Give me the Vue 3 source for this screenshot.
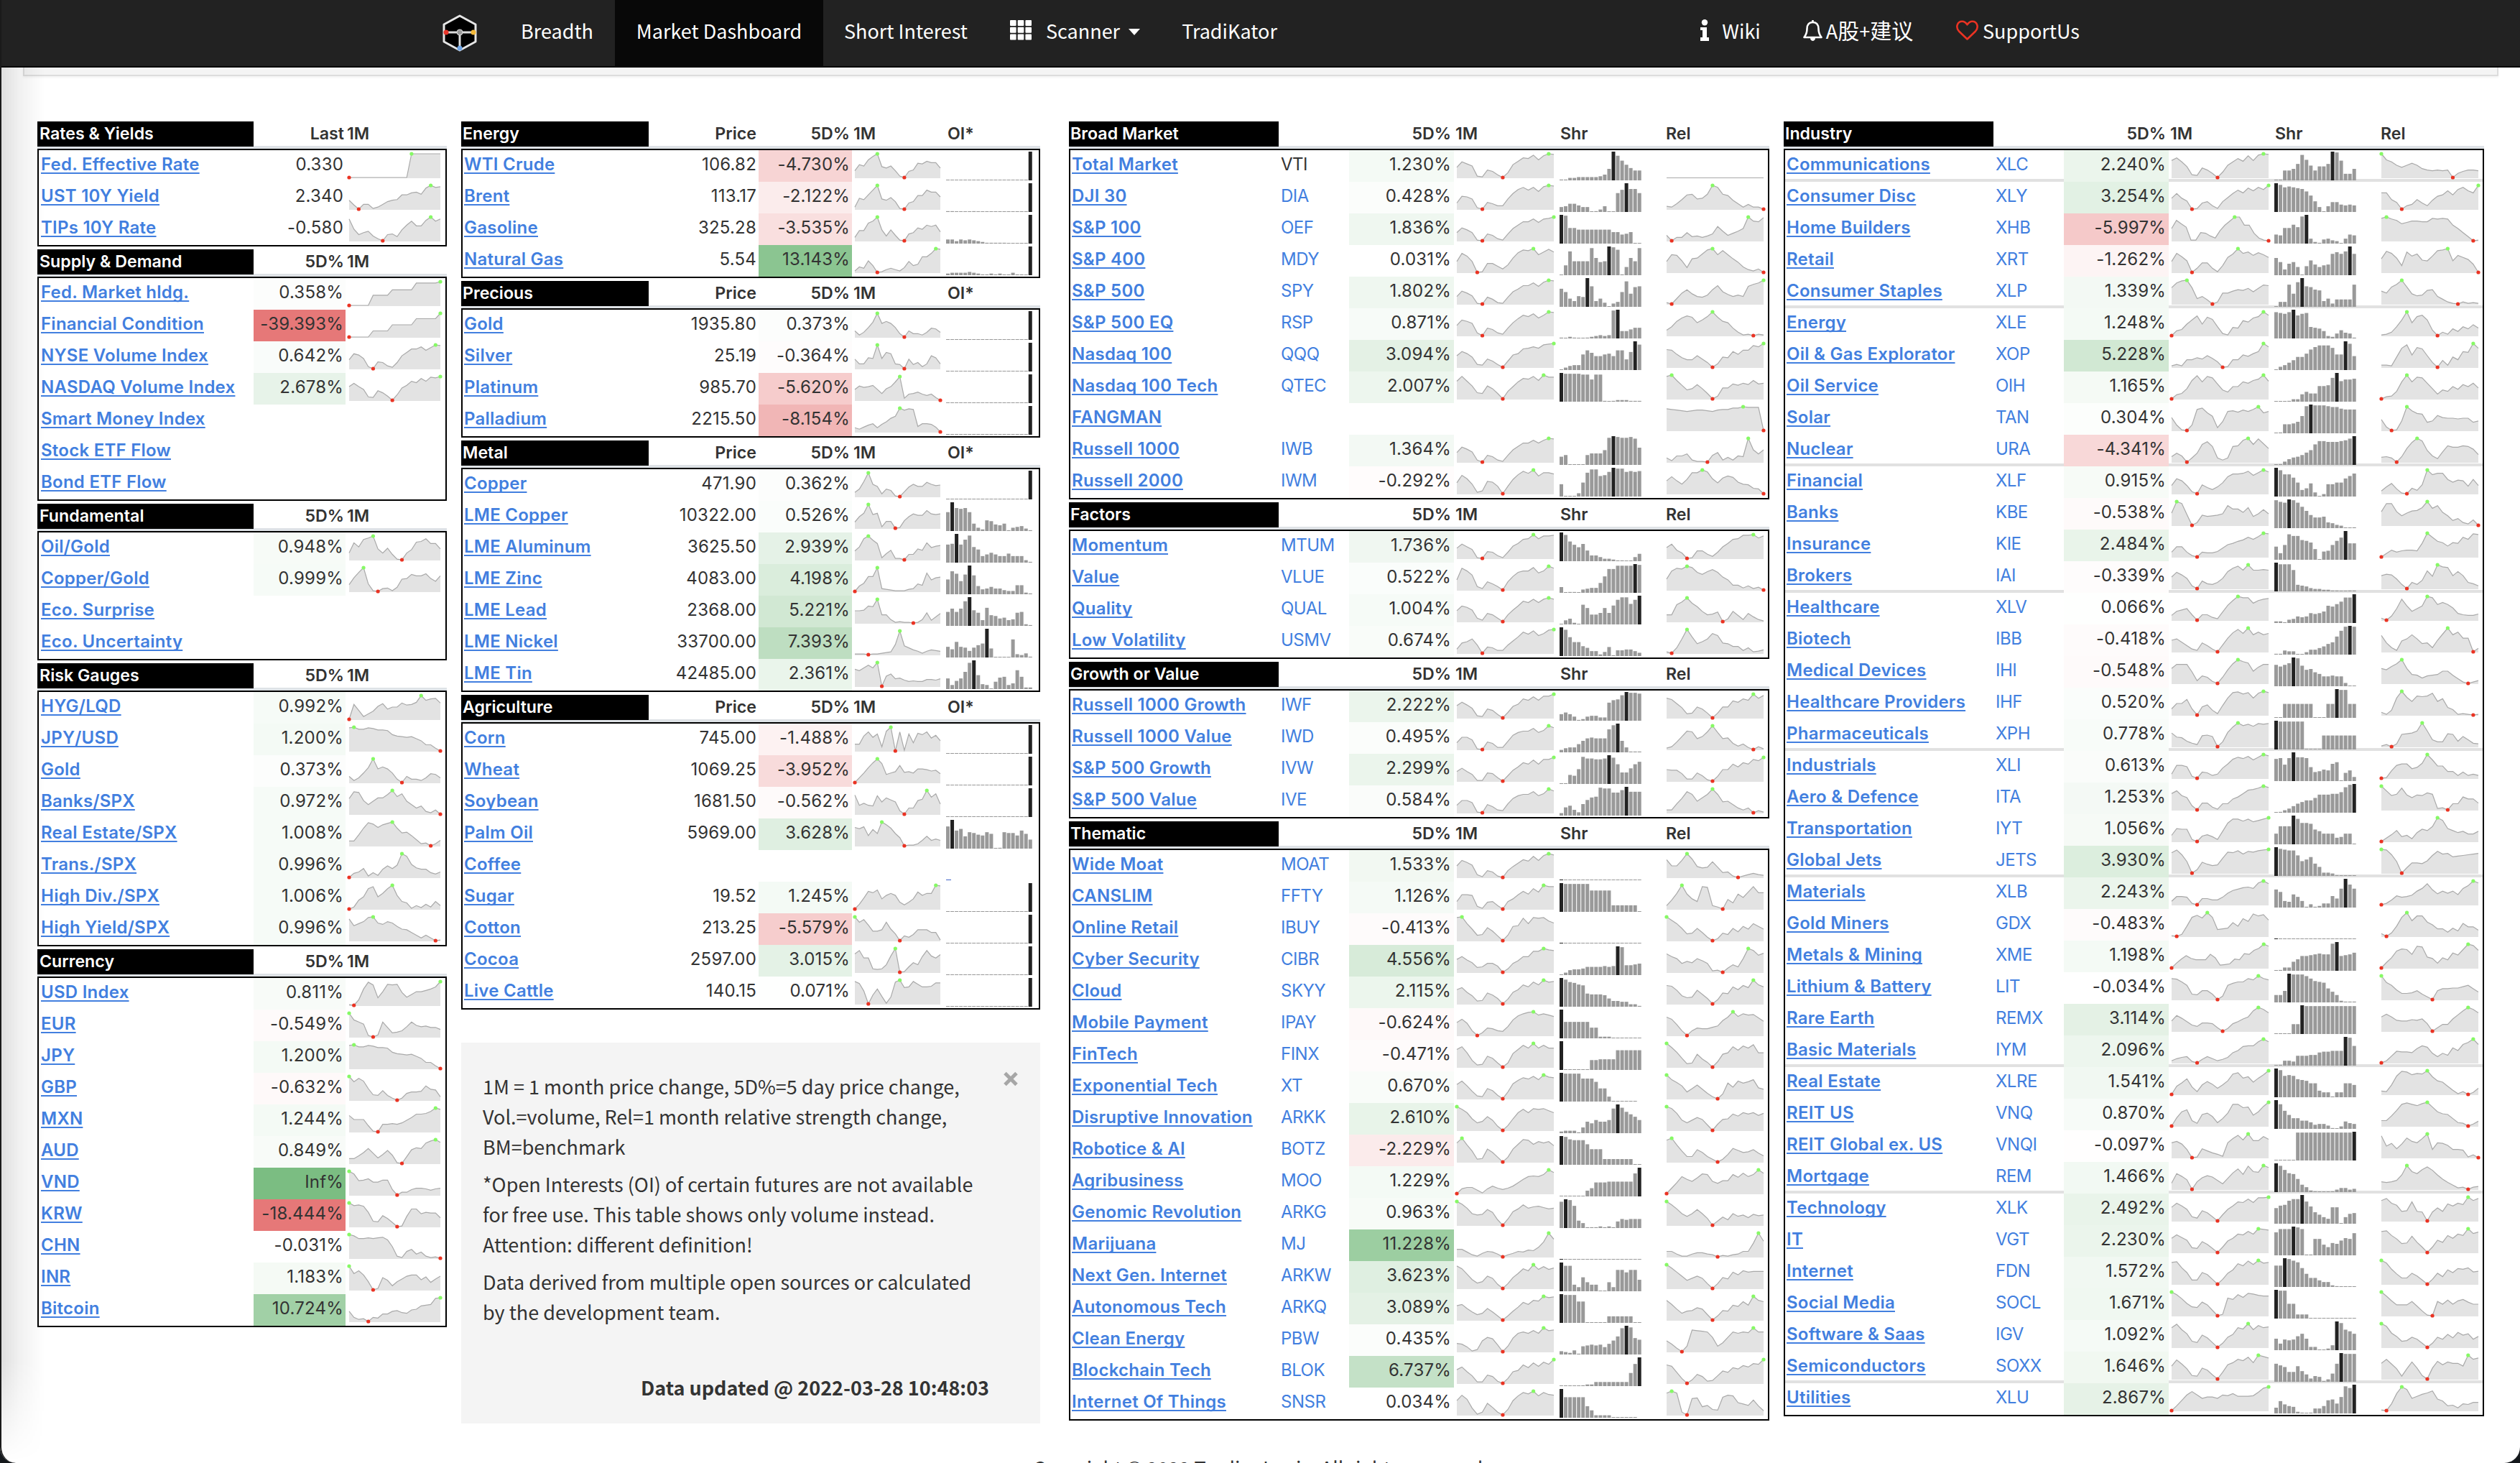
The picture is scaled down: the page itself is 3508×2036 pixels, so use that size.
<script setup>
// Series are packed one character per sample, base 36 (0 = low, z = high).
// "-" draws a flat line, "#" a highlighted bar with no height, "" leaves the cell empty.
const EMPTY_BARS = '#000000000000000000'
const LAST_ONLY = '0000000000000000000z'

const parse = (kind, text) =>
  text.trim().split('\n').map((line) => {
    const f = line.split('|').map((s) => s.trim())
    if (kind === 'macro') return { name: f[0], value: f[1], line: f[2] }
    if (kind === 'futures') return { name: f[0], price: f[1], value: f[2], line: f[3], bars: f[4] === 'L' ? LAST_ONLY : f[4] }
    return { name: f[0], ticker: f[1], value: f[2], line: f[3], bars: f[4] === 'E' ? EMPTY_BARS : f[4], rel: f[5], rule: f[6] === '_' }
  })

const section = (kind, title, text, first = '5D%') => ({ title, first, rows: parse(kind, text) })

const macro = [
  section('macro', 'Rates & Yields', `
Fed. Effective Rate|0.330|0000000000000zzzzzzz
UST 10Y Yield|2.340|d6077137bdellopmvzwx
TIPs 10Y Rate|-0.580|wh9ce7309a6gntmmuztw`, 'Last'),
  section('macro', 'Supply & Demand', `
Fed. Market hldg.|0.358%|00000ffffnnnnnxxxxxz
Financial Condition|-39.393%|000009999iiiiirrrrrz
NYSE Volume Index|0.642%|dmkf30a9429jottwrvzy
NASDAQ Volume Index|2.678%|kpkg54eb608imsqwsyxz
Smart Money Index||
Stock ETF Flow||
Bond ETF Flow||`),
  section('macro', 'Fundamental', `
Oil/Gold|0.948%|apjuwzgah810afqrvoog
Copper/Gold|0.999%|akszb104516ijpnnqjfn
Eco. Surprise||
Eco. Uncertainty||`),
  section('macro', 'Risk Gauges', `
HYG/LQD|0.992%|0md48cjnfiiolmpzsuvo
JPY/USD|1.200%|yzwwyxvvuomlklif9940
Gold|0.373%|937emzknke5095537dc7
Banks/SPX|0.972%|nxwkejootzquje9c4260
Real Estate/SPX|1.008%|77gqywrvxzqjkf934038
Trans./SPX|0.996%|068d273chdizvjecc758
High Div./SPX|1.006%|03diuxinuzkb915273b5
High Yield/SPX|0.996%|wmpsyzqosqlhgc848401`),
  section('macro', 'Currency', `
USD Index|0.811%|108oyubkvuvjcgkkmorz
EUR|-0.549%|zpmj203me679fmhfgeeb
JPY|1.200%|yzwwyxvvuomlklif9940
GBP|-0.632%|zrwsh87e7303accdlgf5
MXN|1.244%|oiii910bbcbdhlqqruzx
AUD|0.849%|77bgmf8djc10aknmuxzv
VND|Inf%|zvlmojjmm80448aa979a
KRW|-18.444%|zvwul87gc601fqqjlkkd
CHN|-0.031%|zxttutuvrh31ad693120
INR|1.183%|zosmc02ie6cgkmmfjbgk
Bitcoin|10.724%|f634065bbfgdchinopyz`),
]

const futures = [
  section('futures', 'Energy', `
WTI Crude|106.82|-4.730%|ajhqvzgeha209blkomme|L
Brent|113.17|-2.122%|3gelszfdhb109bkksppi|1100001000000000000z
Gasoline|325.28|-3.535%|5ffqtzg7g810acjhnlnd|5535454321111100000z
Natural Gas|5.54|13.143%|286ha0146427gacnnszy|2333343211212113110z`),
  section('futures', 'Precious', `
Gold|1935.80|0.373%|937emzknke5095537dc7|L
Silver|25.19|-0.364%|e77gfzfom760e6937jg7|L
Platinum|985.70|-5.620%|gljkmgahkrz39ac97940|L
Palladium|2215.50|-8.154%|647ac6bfknzwyx8ccb70|L`),
  section('futures', 'Metal', `
Copper|471.90|0.362%|6bmzif4b9107eiffligh|L
LME Copper|10322.00|0.526%|9hmzkm2aa01bhljjqlkl|nzsrsn942dc879145631
LME Aluminum|3625.50|2.939%|djvzto39e22088gepikl|mnzmsxjg8aca88b88831
LME Zinc|4083.00|4.198%|08cmmz43211134b9rhkl|ispgozna67977544bb21
LME Lead|2368.00|5.221%|iijpozcc51211015f49e|hlhluzjg7mdc9a78gh21
LME Nickel|33700.00|7.393%|111011234fzda7525765|dajdc8cfhzb0000m4351
LME Tin|42485.00|2.361%|pnrvrz0fibc97877aa9b|d5adlwzh6509ef57nf22`),
  section('futures', 'Agriculture', `
Corn|745.00|-1.488%|aamskp6tz0s1pcqosjnf|L
Wheat|1069.25|-3.952%|07emtzscegpfgekkjhid|L
Soybean|1681.50|-0.562%|sdgdcriolI5099kmzpuf|L
Palm Oil|5969.00|3.628%|rpsfoizvqic01138e8a8|rzmofkjhgki01kjjgmib
Coffee||||.
Sugar|19.52|1.245%|07gqosfknka6afpknnzy|L
Cotton|213.25|-5.579%|zrvneegrha0759gggcc1|L
Cocoa|2597.00|3.015%|rwll545boz018ebnwolq|L
Live Cattle|140.15|0.071%|xuj0dmb1awzopxtppqvv|L`),
]

const equity = [
  section('etf', 'Broad Market', `
Total Market|VTI|1.230%|fnkh21b9407jotsxqwzy|11334444457ezuojfcc|-
DJI 30|DIA|0.428%|9jif20a855fntwswqxzy|67aa866013700nrzssn|438elmfgmzwmkd837330
S&P 100|OEF|1.836%|cjgc10a831ainsswrwxz|zyjjhhhhhhhheebce00|8055c6757ale8beiztsy
S&P 400|MDY|0.031%|gsog01dd95bltxwzquyu|0cthhhhxlghzyv1alhx|gqph7klrxzqwqkf84250
S&P 500|SPY|1.802%|bjgc10a721aimrrvqwzy|mia7dczp7a5046ivgop|208glfbadlriebdbqtvz
S&P 500 EQ|RSP|0.871%|fnli40b942bjpuswquzy|102100123434yz99bdd|8dlqtrjnszrljb512021
Nasdaq 100|QQQ|3.094%|hnkf43c9409ikrsusxyz|03566jolhhjkhoodmzv|qpjebbhc705fenjppwuz
Nasdaq 100 Tech|QTEC|2.007%|qxqj98jf80biputxrzww|zyyyyxxrxx101222111|xzrkdflf804ggmknlrmn
FANGMAN|||||wvutstuutsuvvxxzyyy0
Russell 1000|IWB|1.364%|emjf30a831ainsswswzy|ac0000ceeeixzyxxywl|6299c3110ae37398zici
Russell 2000|IWM|-0.292%|grme24ihb0blsxuzqvvt|f0004htxxpquzyyuvuv|jpjelvvzwmgnqohed870`),
  section('etf', 'Factors', `
Momentum|MTUM|1.736%|flhd10a9419imstztxxy|zwokhld775332110059|glc801bb639hmstyyzux
Value|VLUE|0.522%|fwsm52c950ckqssxpszw|701104566ckttxxxxzy|gswvzxqnruqjf7736240
Quality|QUAL|1.004%|gnlh52ca50ahnusxsxzx|05720okccekenuxxpuz|aaptzrmfabe04f93c731
Low Volatility|USMV|0.674%|6fhlc09844ciovsxqtyz|zwnhhca6625b1778864|208lzoehltqfeaa48235`),
  section('etf', 'Growth or Value', `
Russell 1000 Growth|IWF|2.222%|inje32db508hksqvqwwz|8a851256644mpqvzyyx|trlf67gd707ggpnsqztx
Russell 1000 Value|IWD|0.495%|aiie10b933clprrvpszw|3566aehihhhsxze6111|24bjrqgjqzpgh9583041
S&P 500 Growth|IVW|2.299%|ejea11cb508glrpvpwwz|00baixvvuuvzwoeejor|hggb33c8207hhplrpwuz
S&P 500 Value|IVE|0.584%|biif10c943dlprrvpszw|3ac74ejmnyxxssvzttt|44dlvrhmrzrghc747031`),
  section('etf', 'Thematic', `
Wide Moat|MOAT|1.533%|hpmi41a820aglqovpwzx|E|qhhpzrgefnf782024643
CANSLIM|FFTY|1.126%|bllk41ab50bflqmupzxx|zyyyyyyqqqqq8888880|5dnzmfbxw530e9mhpxoo
Online Retail|IBUY|-0.413%|yzph89je708lmxpyxytq|E|zupiabic503b9idlhplh
Cyber Security|CIBR|4.556%|jnie78dd905dhnnvvzxw|036778aaaababzyccde|rnkdgekhd2306b8kzwps
Cloud|SKYY|2.115%|lohc45gd807hlspwszwx|zxutrqgfffea7766331|rqkc9ake806gfplrozsp
Mobile Payment|IPAY|-0.624%|joi704ba76dntwyzuwus|zkkkkkkdd2220000000|rog707baacemrzswuvql
FinTech|FINX|-0.471%|qula34gd606kqwszswss|z000000ccddddoooooo|ztmd56jc708jlupvsxll
Exponential Tech|XT|0.670%|lqjb43fc50amrvtxszwv|zyyyyssso​gg6000000|zsojafke8307nhqnpsge
Disruptive Innovation|ARKK|2.610%|zvqhbdkf607hqvqwvwtq|233317ecgeeguzvqnkg|zwpfbfjg809gholqoqmp
Robotice & AI|BOTZ|-2.229%|szpg45je707jqxwqusuo|zyvuuupjjj777777700|wzpg88ie8404bkhefid9
Agribusiness|MOO|1.229%|0799517b868bglpqpszv|0000007ahhhiiiiiisz|08gplintsifjjsoupszu
Genomic Revolution|ARKG|0.963%|zvphfgnj809kouprsqop|wzyr9611121218babbb|zuohdhnha06c8hdfbgef
Marijuana|MJ|11.228%|bb731587403587a9emzq|E|88411466430213488kzn
Next Gen. Internet|ARKW|3.623%|xtld8aif607gmtqzswsu|zvv85hb8800b5qqnqqe|zuoicfif707geokqoppp
Autonomous Tech|ARKQ|3.089%|lnhc8ahc606djqntszxy|zyyyqq0000088888800|tngadeig806edmkrmztr
Clean Energy|PBW|0.435%|cb713glja08krtrvrzvw|43251abcbc9dhmwzxki|gb508wvutl8dltrtsztt
Blockchain Tech|BLOK|6.737%|kohb22ca307hjrnupvsz|0000012255555555grz|rpg705da34bignlqotsz
Internet Of Things|SNSR|0.034%|ltna14hb408lsxvzsxut|zppppp​e93333000000|wzw40opce87qtsigemd6`),
]

const industry = [
  section('etf', 'Industry', `
Communications|XLC|2.240%|ptng43eb608insowpxzy|00ccekvpichhkzyo88e|zqnifilidbabab069bba|_
Consumer Disc|XLY|3.254%|gngc019b51bhnsovrwtz|zxuvutspkd607cc9898|ooea057e95djlrltwroz
Home Builders|XHB|-5.997%|iupk11cb74fntzznnb410|bajjnkxz621564306ba|xzwuprttssxwxwnic601
Retail|XRT|-1.262%|gsnh06ee61amrzsuptqm|lg7ega0bidacdqsqtzq|kvslauorihowxzhpmjc0
Consumer Staples|XLP|1.339%|ovyzo8b603ggjlkninsr|066rguzpolk7a49999r|jgptzpfcdklb73103121|_
Energy|XLE|1.248%|079hnthrod31cbmkqszu|wvuwzsuvedc9326a761|125dnzjsun8052a6dagb
Oil & Gas Explorator|XOP|5.228%|242bbechd801bbigknzu|0469cggkpsuuurjjzwh|332fsxitrh70a3fbnmzs
Oil Service|OIH|1.165%|068frypxvmdaiipnrtzq|0001339caajjktzprrs|034bpzpwvnf7dbieling
Solar|TAN|0.304%|j8108vxql4dstrusvzqs|01bbcelxzyyyxwwuttt|g501eztpocemjiihiice
Nuclear|URA|-4.341%|8d906dqun636nowzqyrk|01479acfipttssstuwz|78608ktzvh95fommonjb|_
Financial|XLF|0.915%|cmjc30d96agpttuxrvzw|zwrrnh8ag503ffhhmps|4af71085dzsuulhkjblc
Banks|KBE|-0.538%|izwg04fdefhtoojqdhnh|ywvzyvqlgdde7643001|kwwkeilmqzptje7a4280
Insurance|KIE|2.484%|7ff7207668diknptquzy|g8ivttonld0abinrzkk|05a79aa9kztnlglktqyx
Brokers|IAI|-0.339%|hokf40b769fpuxrzrrsr|zxxxq87643322110011|jlke6096cqizwvjpj974|_
Healthcare|XLV|0.066%|7dfh808842cmtzxxptvw|22045878cbcelknqvvz|306hvldhlzxnqnia8779
Biotech|IBB|-0.418%|hje942d940aksxrzptpr|11544003668adfmtyzy|od62gjpjcd6hqzptkk05
Medical Devices|IHI|-0.548%|msssh4b9309ktzwuioss|qoqszypklhfccdcc400|mkptzmdc8bcdiic72024
Healthcare Providers|IHF|0.520%|9hhn90cf72epxyvxpwzx|00hhhhhhh000hhzyyhh|417pzqksrswkob812101
Pharmaceuticals|XPH|0.778%|ked853ghf07ltzvxuyxy|zyyyyyy0000hhhhhhhh|1304ijknzna77ji8fa54|_
Industrials|XLI|0.613%|6jjh309846flsvtwrvzx|rskszttshbcedln1ad5|01bjllegmzriiaa49464
Aero & Defence|ITA|1.253%|osli60aa4199gjotuwzx|01358bdffimmmnnpvyz|zslnwmimlpn23099jgga
Transportation|IYT|1.056%|9jii308a73frxxuxtvxz|dmmmzvqqpigddd89dd0|05ag794digmzvjgdfbbf
Global Jets|JETS|3.930%|uyrh05gdbcmvuxswvxyz|zxwvvpiknfb44310000|zyrh08ffeiqwstopqrst|_
Materials|XLB|2.243%|5ccb209977bhlnpqowzv|mj87gd8141255ebnzsn|027dbcekovmgkhkfoszw
Gold Miners|GDX|-0.483%|103fsvrzsabckfqmxuwo|E|405fsznuulhbb6c8jee9
Metals & Mining|XME|1.198%|07dieccckf456dclkqtzw|0144beiijklkkxzijkm|08fpsrkwvge7fcmjrzxq
Lithium & Battery|LIT|-0.034%|vuql87dd805loqqvtzvt|99ezyyywtqpohd92111|zple99ad840dgghhjlgb
Rare Earth|REMX|3.114%|fnje97ccb504beiluzwr|0000cczyyyyyyyyyyyy|lplgffhgib05aaiouzwr
Basic Materials|IYM|2.096%|368920596358fioppvzv|01665cccddghhiiizyo|03ahggflpne9ebmiruzr|_
Real Estate|XLRE|1.541%|0chnb4ejf9ekuwoqiotz|zxqrqmlkhh866166hhf|54eryxtvuzqkic614039
REIT US|VNQ|0.870%|0clo84hje5bjwwrsgltz|zumhddaa85664103976|88fnwywuxzslihb54037
REIT Global ex. US|VNQI|-0.097%|mokc01da752msxqzppvr|00000yyyyyyyyyyyyyz|whldktomszcmliccb140
Mortgage|REM|1.466%|9nje0bhkid8goumyqpzw|zwrnmg9621000135534|babdlzqntxslfa623034|_
Technology|XLK|2.492%|kqmh64fc609hmsrwryyz|jmnsuuzrleb86kk08cd|uxqnefsed0djepmqozux
IT|VGT|2.230%|lqmi76gc608hlrqvrzyx|swwwzyw11kkdafeilkr|vwpkdeof808ifplrpzsu
Internet|FDN|1.572%|wxoh66he707glurytzvw|qqzywungbb866210000|zvmf99gc607gblhnmoij
Social Media|SOCL|1.671%|zvpidckg802qovrxwutt|zyyii55500000000000|ztmgggle710lhnhmokhh
Software & Saas|IGV|1.092%|tyqk97ie706fjtrzqwtu|e8dcdhke440026zxpnk|zvlg9afc606fcjemikcg
Semiconductors|SOXX|1.646%|jsmf54gd60alotrwozxv|mkiccjd947603amzyyy|ntmf4fpg50gqlpnnjztv|_
Utilities|XLU|2.867%|07fnsnikkinmplllmrxz|7fb982101669ghckxvz|10apzviloqthe784a9cc`),
]

const clean = (s) => (s || '').replace(/[^0-9a-z#.-]/gi, '').toLowerCase()

// Price line: samples spread over the width, 33px tall, floor at y=38.
const spark = (raw, w) => {
  const s = clean(raw)
  if (!s) return null
  if (s === '-') return { flat: true, w }
  const step = w / (s.length - 1)
  const pts = [...s].map((c, i) => [i * step, 38 - (parseInt(c, 36) / 35) * 33])
  const line = pts.map((p) => p.map((n) => n.toFixed(1)).join(',')).join(' ')
  return { w, line, area: `0,39 ${line} ${w},39`, low: pts[s.indexOf('0')], high: pts[s.indexOf('z')] }
}

const bars = (raw) => {
  const s = clean(raw)
  if (!s) return []
  if (s === '.') return [{ x: 0, h: 1, w: 7, tone: '#3f63c8' }]
  return [...s].map((c, i) => {
    const v = c === '#' ? 0 : parseInt(c, 36)
    return { x: i * 6.04, w: 5, h: Math.max(1, (v / 35) * 40), tone: c === 'z' || c === '#' ? '#222' : '#999' }
  })
}

const tint = (value) => {
  if (!value || !value.endsWith('%')) return {}
  const v = value === 'Inf%' ? 15 : parseFloat(value)
  const k = Math.min(1, Math.abs(v) / 15)
  const end = v >= 0 ? [123, 189, 130] : [230, 120, 120]
  return { background: `rgb(${end.map((c) => Math.round(255 - (255 - c) * k)).join(',')})` }
}

const columns = [
  { kind: 'macro', w: 127, sections: macro },
  { kind: 'futures', w: 119, sections: futures },
  { kind: 'etf', w: 135, sections: equity },
  { kind: 'etf industry', w: 135, sections: industry },
].map((col) => ({
  ...col,
  sections: col.sections.map((sec) => ({
    ...sec,
    rows: sec.rows.map((r) => ({ ...r, line: spark(r.line, col.w), bars: bars(r.bars), rel: spark(r.rel, 135) })),
  })),
}))
</script>

<template>
  <div class="page">
    <nav class="nav">
      <svg class="logo" viewBox="0 0 48 52" width="48" height="52">
        <path d="M24 2 46 14V38L24 50 2 38V14Z" fill="#000" stroke="#e6e6e6" stroke-width="3" stroke-linejoin="round" />
        <path d="M3 25H45M24 25V48" stroke="#ddd" stroke-width="3" />
        <circle cx="24" cy="25" r="4" fill="#999" stroke="#ddd" />
        <circle cx="5" cy="25" r="3.5" fill="#e8362a" />
        <circle cx="43" cy="25" r="3.5" fill="#f4b93a" />
        <circle cx="24" cy="47" r="3.5" fill="#6fa5e6" />
      </svg>
      <a class="item breadth">Breadth</a>
      <a class="item active">Market Dashboard</a>
      <a class="item short">Short Interest</a>
      <a class="item scanner">
        <svg width="30" height="28" viewBox="0 0 30 28" fill="#fff">
          <template v-for="r in 3" :key="r">
            <rect v-for="c in 3" :key="c" :x="(c - 1) * 10.7" :y="(r - 1) * 9.8" width="8.6" height="8" rx="1" />
          </template>
        </svg>
        <span>Scanner</span><i class="caret"></i>
      </a>
      <a class="item trad">TradiKator</a>
      <a class="item wiki">
        <svg width="12" height="30" viewBox="0 0 12 30" fill="#fff"><circle cx="6" cy="4.2" r="4.2" /><path d="M0 11H9V25H12V30H0V25H3V15H0Z" /></svg>
        <span>Wiki</span>
      </a>
      <a class="item advice">
        <svg width="27" height="31" viewBox="0 0 27 31" fill="none" stroke="#fff" stroke-width="2.6" stroke-linejoin="round">
          <path d="M13.5 1V4M13.5 4C8 4 5.5 8 5.5 13C5.5 20 3.5 22 1.5 25H25.5C23.5 22 21.5 20 21.5 13C21.5 8 19 4 13.5 4Z" />
          <path d="M10.5 26.5C10.5 30.5 16.5 30.5 16.5 26.5Z" fill="#fff" stroke-width="1" />
        </svg>
        <span>A<b>股</b>+<b>建议</b></span>
      </a>
      <a class="item support">
        <svg width="31" height="28" viewBox="0 0 31 28" fill="none" stroke="#ea3323" stroke-width="2.6" stroke-linejoin="round">
          <path d="M15.5 26.5 4 15.5C-1 10 1.5 1.8 8.5 1.8 12 1.8 14 4.2 15.5 6.3 17 4.2 19 1.8 22.5 1.8 29.5 1.8 32 10 27 15.5Z" />
        </svg>
        <span>SupportUs</span>
      </a>
    </nav>
    <div class="strip"></div>

    <main class="board">
      <div v-for="(col, ci) in columns" :key="ci" class="col" :class="col.kind">
        <section v-for="sec in col.sections" :key="sec.title" class="sec">
          <header class="head">
            <span class="title">{{ sec.title }}</span>
            <span v-if="col.kind === 'futures'" class="num">Price</span>
            <span v-else-if="col.kind !== 'macro'"></span>
            <span class="num">{{ sec.first }}</span>
            <span class="h1m">1M</span>
            <span v-if="col.kind === 'futures'" class="hbar">OI*</span>
            <template v-else-if="col.kind !== 'macro'">
              <span class="hbar">Shr</span><span class="hrel">Rel</span>
            </template>
          </header>
          <div class="box">
            <div v-for="row in sec.rows" :key="row.name" class="row" :class="{ rule: row.rule }">
              <span class="name"><a>{{ row.name }}</a></span>
              <span v-if="col.kind === 'futures'" class="num">{{ row.price }}</span>
              <span v-else-if="col.kind !== 'macro'" class="ticker" :class="{ plain: row.ticker === 'VTI' }">{{ row.ticker }}</span>
              <span class="num pct" :style="tint(row.value)">{{ row.value }}</span>
              <span class="cell">
                <svg v-if="row.line" class="chart" :width="row.line.w" height="44">
                  <polygon :points="row.line.area" fill="#e3e3e3" />
                  <polyline :points="row.line.line" fill="none" stroke="#a9a9a9" stroke-width="1.2" />
                  <circle v-if="row.line.high" :cx="row.line.high[0]" :cy="row.line.high[1]" r="2.6" fill="#86f965" />
                  <circle v-if="row.line.low" :cx="row.line.low[0]" :cy="row.line.low[1]" r="2.6" fill="#ea3323" />
                </svg>
              </span>
              <span v-if="col.kind !== 'macro'" class="cell">
                <svg class="chart" width="121" height="44">
                  <rect v-for="(b, bi) in row.bars" :key="bi" :x="b.x" :y="42 - b.h" :width="b.w" :height="b.h" :fill="b.tone" />
                </svg>
              </span>
              <span v-if="col.kind.startsWith('etf')" class="cell">
                <svg v-if="row.rel" class="chart" :width="row.rel.w" height="44">
                  <path v-if="row.rel.flat" d="M0 38.5H135" stroke="#a9a9a9" />
                  <template v-else>
                    <polygon :points="row.rel.area" fill="#e3e3e3" />
                    <polyline :points="row.rel.line" fill="none" stroke="#a9a9a9" stroke-width="1.2" />
                    <circle v-if="row.rel.high" :cx="row.rel.high[0]" :cy="row.rel.high[1]" r="2.6" fill="#86f965" />
                    <circle v-if="row.rel.low" :cx="row.rel.low[0]" :cy="row.rel.low[1]" r="2.6" fill="#ea3323" />
                  </template>
                </svg>
              </span>
            </div>
          </div>
        </section>

        <aside v-if="col.kind === 'futures'" class="note">
          <svg class="close" width="20" height="21" viewBox="0 0 20 21"><path d="M2 2.5 18 18.5M18 2.5 2 18.5" stroke="#a6a6a6" stroke-width="5" /></svg>
          <p>1M = 1 month price change, 5D%=5 day price change,<br />Vol.=volume, Rel=1 month relative strength change,<br />BM=benchmark</p>
          <p>*Open Interests (OI) of certain futures are not available<br />for free use. This table shows only volume instead.<br />Attention: different definition!</p>
          <p>Data derived from multiple open sources or calculated<br />by the development team.</p>
          <p class="updated">Data updated @ 2022-03-28 10:48:03</p>
        </aside>
      </div>
    </main>
    <footer class="foot">Copyright © 2022 TradingLogic. All rights reserved</footer>
    <div class="shade"></div>
    <div class="frame"></div>
  </div>
</template>

<style>
body {
  margin: 0;
  background: #fff;
}
</style>

<style scoped>
.page {
  position: relative;
  width: 3508px;
  height: 2036px;
  overflow: hidden;
  background: #fff;
  color: #333;
  font-family: Inter, "Liberation Sans", sans-serif;
  font-size: 24px;
  box-sizing: border-box;
}
.nav {
  display: flex;
  align-items: stretch;
  height: 92px;
  padding-left: 616px;
  background: #222;
  border-bottom: 2px solid #080808;
  color: #fff;
  font: 27px "Noto Sans CJK SC", sans-serif;
}
.logo {
  margin: 20px 31px 0 0;
  flex: none;
}
.item {
  display: flex;
  align-items: center;
  justify-content: center;
  flex: none;
  box-sizing: border-box;
  padding-bottom: 8px;
  white-space: nowrap;
}
.breadth { width: 161px; }
.active { width: 290px; background: #080808; }
.short { width: 230px; }
.scanner { width: 241px; margin-right: -2px; }
.scanner span { margin: 0 12px 0 20px; }
.caret {
  border: 8px solid transparent;
  border-top: 9px solid #fff;
  border-bottom: 0;
  margin-top: 4px;
}
.trad { width: 193px; }
.wiki { width: 142px; margin-left: 530px; }
.wiki span { margin-left: 18px; }
.advice { width: 213px; }
.advice span { margin-left: 5px; }
.advice b { font-weight: 400; font-size: 30px; line-height: 30px; }
.support { width: 232px; }
.support span { margin-left: 6px; }
.strip {
  height: 10px;
  margin: 0 30px 0 32px;
  background: #f4f4f4;
  border: 2px solid #ddd;
  border-top: 0;
  box-shadow: 0 2px 3px rgba(0, 0, 0, 0.05);
}
.board {
  display: flex;
  align-items: flex-start;
  padding: 63px 0 0 52px;
}
.col { flex: none; }
.macro { width: 570px; margin-right: 20px; }
.futures { width: 806px; margin-right: 40px; }
.etf { width: 975px; margin-right: 20px; }
.sec { margin-bottom: 4px; }
.head {
  display: grid;
  height: 34px;
  line-height: 35px;
  border-bottom: 4px solid #dee2e6;
  font-size: 23.2px;
  font-weight: 600;
  white-space: nowrap;
}
.title {
  background: #000;
  color: #fff;
  padding-left: 3px;
}
.futures .title, .etf .title { padding-left: 2px; }
.box { border: 2px solid #000; }
.row {
  display: grid;
  height: 44px;
  line-height: 39px;
  white-space: nowrap;
}
.rule { background: linear-gradient(#e1e1e1, #e1e1e1) 0 100% / 100% 4px no-repeat; }
.macro .head { grid-template-columns: 301px 128px 1fr; }
.macro .row { grid-template-columns: 299px 133px 1fr; }
.futures .head { grid-template-columns: 261px 153px 130px 131px 1fr; }
.futures .row { grid-template-columns: 259px 153px 134px 127px 1fr; }
.etf .head { grid-template-columns: 292px 98px 146px 146px 147px 1fr; }
.etf .row { grid-template-columns: 290px 98px 150px 143px 149px 1fr; }
.name {
  padding-left: 3px;
  font-weight: 600;
  letter-spacing: 0.25px;
  color: #427fdf;
}
.futures .name, .etf .name { padding-left: 2px; }
.name a {
  text-decoration: underline;
  text-decoration-thickness: 2px;
  text-underline-offset: 3px;
  text-decoration-skip-ink: none;
}
.ticker {
  color: #427fdf;
  padding-left: 3px;
  letter-spacing: -0.5px;
}
.ticker.plain { color: #333; }
.num { text-align: right; padding-right: 3px; }
.row .num { letter-spacing: 0.2px; }
.pct { width: 125px; }
.futures .pct { width: 127px; }
.etf .pct { width: 143px; }
.macro .head .num { padding-right: 2px; }
.etf .num { padding-right: 4px; }
.etf .pct { width: 142px; }
.head .h1m, .hbar, .hrel { padding-left: 2px; }
.cell, .chart { display: block; }
.chart { overflow: visible; }
.note {
  position: relative;
  box-sizing: border-box;
  height: 530px;
  margin-top: 46px;
  padding: 40px 30px 0;
  background: #f4f4f4;
  font: 27px/42px "Noto Sans CJK SC", sans-serif;
  white-space: nowrap;
}
.note p { margin: 0 0 10px; }
.note .updated {
  margin-top: 63px;
  padding-right: 41px;
  text-align: right;
  font-weight: 700;
}
.close {
  position: absolute;
  right: 31px;
  top: 40px;
}
.foot {
  position: absolute;
  left: 1438px;
  top: 2022px;
  font: 27px/42px "Noto Sans CJK SC", sans-serif;
  white-space: nowrap;
}
.shade {
  position: absolute;
  left: 2px;
  top: 94px;
  width: 60px;
  bottom: 0;
  background: linear-gradient(90deg, rgba(0, 0, 0, 0.13), rgba(0, 0, 0, 0.06) 40%, transparent);
  mask-image: linear-gradient(#000 1800px, transparent 1940px);
}
.frame {
  position: absolute;
  inset: -30px 0 0 0;
  border-left: 2px solid #1a1a1a;
  border-radius: 0 0 22px 22px;
  box-shadow: 0 0 0 30px #14181c;
}
</style>
